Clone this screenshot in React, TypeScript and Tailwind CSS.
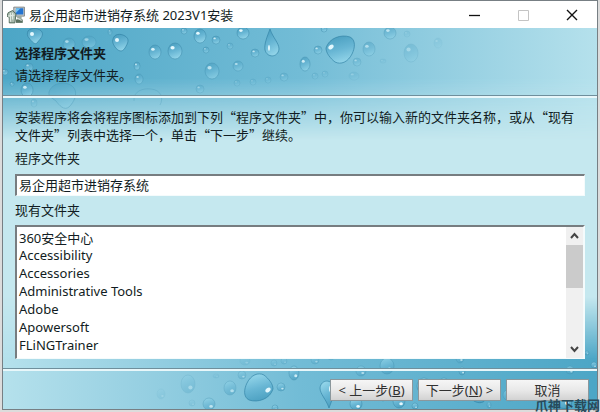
import type { ReactNode } from 'react';

type DropSpec = [x: number, y: number, rx: number, ry: number, opacity: number];

const drops: DropSpec[] = [
  [69, 44, 6, 6, 0.6], [89, 42, 7, 6, 0.5], [110, 32, 2, 3, 0.6], [155, 52, 6, 7, 0.9],
  [175, 51, 7, 8, 1], [184, 31, 3, 3, 0.8], [200, 36, 6, 7, 1], [216, 40, 4, 4, 0.8],
  [206, 50, 3, 3, 0.7], [230, 46, 3, 3, 0.5], [243, 33, 6, 6, 1], [255, 53, 4, 4, 0.7],
  [212, 71, 7, 8, 0.7], [238, 66, 5, 5, 0.6], [284, 77, 4, 4, 0.4], [305, 64, 5, 7, 0.8],
  [318, 50, 4, 4, 0.7], [324, 29, 3, 3, 0.8], [369, 49, 6, 7, 0.5], [390, 33, 6, 6, 0.6],
  [411, 53, 7, 9, 0.3], [357, 62, 4, 4, 0.4], [354, 76, 5, 4, 0.2], [383, 61, 3, 2, 0.2],
  [407, 34, 3, 3, 0.2], [315, 76, 3, 3, 0.3], [325, 74, 3, 3, 0.3], [137, 66, 3, 4, 0.8],
  [139, 79, 4, 5, 0.6], [29, 67, 4, 4, 0.6], [5, 72, 3, 3, 0.8], [27, 90, 6, 7, 0.8],
  [200, 89, 4, 4, 0.4], [237, 83, 3, 3, 0.3], [253, 82, 3, 3, 0.3], [268, 80, 3, 3, 0.3],
  [12, 84, 2, 2, 0.8], [34, 103, 3, 4, 0.3], [438, 43, 4, 5, 0.15],
];

/** Water drops scattered from one corner of the window. */
function WaterDrops({ id, className }: { id: string; className: string }) {
  const fill = `url(#${id})`;
  return (
    <svg className={className} width="600" height="130" viewBox="0 0 600 130" aria-hidden="true">
      <defs>
        <linearGradient id={id} x1="0.3" y1="0" x2="0.6" y2="1">
          <stop offset="0" stopColor="#4a9fc0" />
          <stop offset="0.5" stopColor="#68b6d4" />
          <stop offset="1" stopColor="#94d6ea" />
        </linearGradient>
      </defs>
      {drops.map(([x, y, rx, ry, o]) => (
        <g key={`${x}-${y}`} opacity={o}>
          <ellipse cx={x} cy={y} rx={rx} ry={ry} fill={fill} stroke="#3f8cab" strokeWidth="0.9" strokeOpacity="0.6" />
          <ellipse cx={x - rx * 0.35} cy={y - ry * 0.4} rx={rx * 0.3} ry={ry * 0.22} fill="#e5f8fd" />
        </g>
      ))}
      <g fill={fill} stroke="#3484a6" strokeOpacity="0.7">
        <path d="M28 31C31 27 40 28 42 32C44 36 39 40 37 43C35 45 32 42 29 38C27 36 27 33 28 31Z" />
        <path d="M113 39C114 34 120 33 125 36C130 39 128 43 125 48C122 53 118 51 115 47C113 44 112 42 113 39Z" />
        <path d="M270 29C267 37 264 44 265 50C267 58 278 58 279 49C279 43 273 38 270 29Z" />
        <path d="M326 48C329 38 341 34 350 37C356 40 355 48 352 54C348 62 341 65 335 62C330 58 326 53 326 48Z" />
        <path d="M49 92C52 82 68 80 74 88C78 94 74 102 69 107C64 111 59 105 56 101C52 98 48 96 49 92Z" opacity="0.4" />
        <path d="M134 101C133 91 143 88 151 89C161 90 164 98 160 105" fill="none" opacity="0.3" />
      </g>
      <g fill="#e3f7fd">
        <ellipse cx="32" cy="34" rx="2" ry="2" />
        <ellipse cx="117" cy="40" rx="2" ry="2" />
        <ellipse cx="331" cy="47" rx="3" ry="2" transform="rotate(-35 331 47)" />
        <ellipse cx="269" cy="48" rx="1" ry="3" />
      </g>
    </svg>
  );
}

function InstallerIcon() {
  return (
    <svg className="size-[18px] shrink-0" viewBox="0 0 16 16" aria-hidden="true">
      <path d="M6 1H15.5V9H6Z" fill="#c8cccb" stroke="#6f7578" strokeWidth="0.7" />
      <path d="M8 2H14.5V7.5H7.5Z" fill="#2373d0" />
      <path d="M8 2H12L8 6Z" fill="#73c5ef" />
      <path d="M9 9H13V14H9Z" fill="#9aaba1" />
      <path d="M1 6L5 4L8 7L7 15H2V10L0 9Z" fill="#a7b9ad" stroke="#4b6454" strokeWidth="0.8" />
      <path d="M3 6V14M5 6V12M1 9L7 8M9 11L14 14" stroke="#e2ebe4" />
      <path d="M8 12H14V15H8Z" fill="#58705f" />
      <path d="M10 11L13 13" stroke="#ddd" />
    </svg>
  );
}

function Rule() {
  return <div className="h-[3px] shrink-0 border-t border-[#6f8f9c] bg-[#e8f7fa]" />;
}

function PushButton({ children }: { children: ReactNode }) {
  return (
    <button
      type="button"
      className="h-[22px] w-[83px] whitespace-nowrap border border-[#8b979c] bg-linear-to-b from-[#f6f6f6] via-[#e9e9e9] to-[#d2d2d2] text-center text-[13px] leading-5 text-[#303030]"
    >
      {children}
    </button>
  );
}

const folders = [
  '360安全中心',
  'Accessibility',
  'Accessories',
  'Administrative Tools',
  'Adobe',
  'Apowersoft',
  'FLiNGTrainer',
];

export default function App() {
  return (
    <div className="relative min-h-screen bg-[#dcdcdc] px-0.5 pb-0.5 font-['Noto_Sans','Noto_Sans_CJK_SC',sans-serif] text-[13px] text-[#111c22]">
      <main className="flex min-h-[410px] flex-col border border-[#777f84] bg-white">
        <header className="flex h-[27px] shrink-0 items-center pl-1">
          <InstallerIcon />
          <h1 className="ml-1 flex-1 text-[13px] leading-5">易企用超市进销存系统 2023V1安装</h1>
          <button type="button" aria-label="最小化" className="flex h-full w-12 items-center justify-center">
            <svg width="12" height="12" viewBox="0 0 12 12"><path d="M0 6.5H11" stroke="#111" strokeWidth="1.3" /></svg>
          </button>
          <button type="button" aria-label="最大化" disabled className="flex h-full w-12 items-center justify-center">
            <svg width="12" height="12" viewBox="0 0 12 12"><path d="M1.5 1.5H11.5V11.5H1.5Z" fill="none" stroke="#c4c4c4" /></svg>
          </button>
          <button type="button" aria-label="关闭" className="flex h-full w-[50px] items-center justify-center">
            <svg width="12" height="12" viewBox="0 0 12 12"><path d="M1 1L11 11M11 1L1 11" stroke="#111" strokeWidth="1.4" /></svg>
          </button>
        </header>

        <div className="relative isolate flex flex-1 flex-col overflow-hidden bg-[#c5e8ef]">
          <div className="absolute inset-x-0 top-0 -z-10 h-[112px] bg-linear-to-r from-[#4ca6c6] via-[#72bcd6] to-[#b5e1ec] mask-b-from-45% mask-b-to-100%" />
          <div className="absolute inset-x-0 bottom-0 -z-10 h-[112px] bg-linear-to-l from-[#4ca6c6] via-[#72bcd6] to-[#b5e1ec] mask-t-from-45% mask-t-to-100%" />
          <WaterDrops id="drop-top" className="absolute -top-7 -left-[3px] -z-10" />
          <WaterDrops id="drop-bottom" className="absolute -right-0.5 -bottom-7 -z-10 rotate-180" />

          <section className="h-[67px] shrink-0 px-3 pt-[14px]">
            <h2 className="text-[13px] leading-[22px] font-bold">选择程序文件夹</h2>
            <p className="leading-[22px]">请选择程序文件夹。</p>
          </section>
          <Rule />

          <form className="flex flex-1 flex-col px-3 pt-[10px] pb-[9px]">
            <p className="font-['Noto_Sans_CJK_SC',sans-serif] leading-[18px]">
              安装程序将会将程序图标添加到下列“程序文件夹”中，你可以输入新的文件夹名称，或从“现有文件夹”列表中选择一个，单击“下一步”继续。
            </p>
            <label htmlFor="folder" className="mt-1 leading-5">程序文件夹</label>
            <input
              id="folder"
              defaultValue="易企用超市进销存系统"
              className="mt-1.5 h-[22px] w-full border-t-2 border-r border-b border-l-2 border-[#777d80] border-r-[#f4fbfc] border-b-[#f4fbfc] bg-white px-0.5 pb-0.5 leading-[18px] outline-none"
            />
            <label htmlFor="existing" className="mt-1 leading-5">现有文件夹</label>
            <div className="mt-[5px] flex h-[134px] border-t-2 border-r-2 border-b border-l-2 border-[#777d80] border-r-[#f4fbfc] border-b-[#f4fbfc] bg-white">
              <select id="existing" size={7} className="min-w-0 flex-1 overflow-hidden pt-px outline-none">
                {folders.map((name) => (
                  <option key={name} className="h-[18px] min-h-0 px-0.5 py-0 text-[13px] leading-[18px]">{name}</option>
                ))}
              </select>
              <div className="flex w-[17px] flex-col bg-[#f0f0f0]">
                <button type="button" aria-label="向上滚动" className="flex h-[18px] items-center justify-center">
                  <svg width="9" height="8" viewBox="0 0 9 8"><path d="M1 6L4.5 2L8 6" fill="none" stroke="#444" strokeWidth="2" /></svg>
                </button>
                <div className="h-[43px] bg-[#cbcbcb]" />
                <button type="button" aria-label="向下滚动" className="mt-auto flex h-[18px] items-center justify-center">
                  <svg width="9" height="8" viewBox="0 0 9 8"><path d="M1 2L4.5 6L8 2" fill="none" stroke="#444" strokeWidth="2" /></svg>
                </button>
              </div>
            </div>
          </form>

          <Rule />
          <footer className="flex h-[38px] shrink-0 justify-end gap-[5px] pt-2 pr-2">
            <PushButton>&lt; 上一步(<u>B</u>)</PushButton>
            <PushButton>下一步(<u>N</u>) &gt;</PushButton>
            <PushButton>取消</PushButton>
          </footer>
        </div>
      </main>
      <span className="absolute right-0 bottom-0 font-['Noto_Sans_CJK_SC',sans-serif] text-[13px] leading-[14px] font-bold text-[#284b5b]">爪神下载网</span>
    </div>
  );
}
